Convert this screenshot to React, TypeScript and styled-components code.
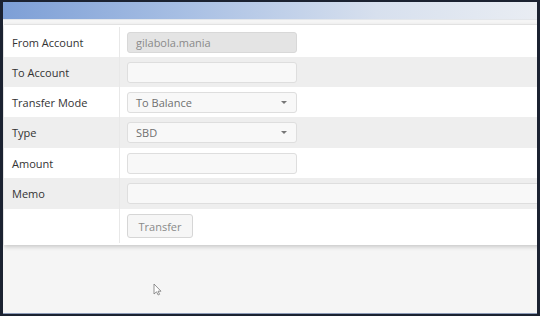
import React from "react";
import styled, { createGlobalStyle } from "styled-components";

const GlobalStyle = createGlobalStyle`
  html, body {
    margin: 0;
    padding: 0;
    background: #1b2231;
  }
  body {
    font-family: "Open Sans", "Liberation Sans", sans-serif;
  }
`;

const Frame = styled.div`
  width: 540px;
  height: 316px;
  box-sizing: border-box;
  padding: 2px 3px 3px 3px;
  background: #1b2231;
`;

const Screen = styled.div`
  position: relative;
  height: 100%;
  background: #f5f5f5;
  overflow: hidden;
  display: flex;
  flex-direction: column;
  border-bottom: 1px solid #8c9bb8;
`;

const TopBar = styled.div`
  height: 17px;
  flex-shrink: 0;
  background: linear-gradient(90deg, #7d9fd6 0%, #a9c0e4 35%, #d7e0ee 70%, #e9edf3 100%);
  border-bottom: 1px solid #e3e6ea;
`;

const Card = styled.div`
  margin: 4px -6px 0 1px;
  padding: 2px 0 2px;
  background: #ffffff;
  border-top: 1px solid #e2e2e2;
  box-shadow: 0 2px 4px rgba(0, 0, 0, 0.18);
`;

const Row = styled.div<{ $shade?: boolean; $h: number }>`
  display: flex;
  align-items: center;
  height: ${(p) => p.$h}px;
  background: ${(p) => (p.$shade ? "#eeeeee" : "#ffffff")};
`;

const Label = styled.div`
  width: 107px;
  flex-shrink: 0;
  align-self: stretch;
  display: flex;
  align-items: center;
  padding-left: 8px;
  border-right: 1px solid #e8e8e8;
  font-size: 11px;
  color: #333333;
`;

const Field = styled.div`
  flex: 1;
  display: flex;
  align-items: center;
  padding-left: 7px;
`;

const Input = styled.div<{ $disabled?: boolean; $wide?: boolean }>`
  box-sizing: border-box;
  height: 21px;
  width: ${(p) => (p.$wide ? "100%" : "170px")};
  display: flex;
  align-items: center;
  justify-content: space-between;
  padding: 0 9px 0 8px;
  border: 1px solid ${(p) => (p.$disabled ? "#d8d8d8" : "#dedede")};
  border-radius: 3px;
  background: ${(p) => (p.$disabled ? "#e4e4e4" : "#f8f8f8")};
  font-size: 11px;
  color: ${(p) => (p.$disabled ? "#8a8a8a" : "#707070")};
`;

const Caret = styled.span`
  width: 0;
  height: 0;
  border-left: 3px solid transparent;
  border-right: 3px solid transparent;
  border-top: 3px solid #777777;
`;

const Button = styled.div`
  box-sizing: border-box;
  height: 24px;
  width: 66px;
  display: flex;
  align-items: center;
  justify-content: center;
  border: 1px solid #d6d6d6;
  border-radius: 3px;
  background: #f6f6f6;
  font-size: 11px;
  color: #8a8a8a;
`;

const Cursor = styled.svg`
  position: absolute;
  left: 150px;
  top: 281px;
`;

type FieldDef = {
  label: string;
  h: number;
  value?: string;
  select?: boolean;
  disabled?: boolean;
  wide?: boolean;
};

const fields: FieldDef[] = [
  { label: "From Account", h: 30, value: "gilabola.mania", disabled: true },
  { label: "To Account", h: 30 },
  { label: "Transfer Mode", h: 30, value: "To Balance", select: true },
  { label: "Type", h: 31, value: "SBD", select: true },
  { label: "Amount", h: 30 },
  { label: "Memo", h: 31, wide: true },
];

export default function App() {
  return (
    <Frame>
      <GlobalStyle />
      <Screen>
        <TopBar />
        <Card>
          {fields.map((f, i) => (
            <Row key={f.label} $h={f.h} $shade={i % 2 === 1}>
              <Label>{f.label}</Label>
              <Field>
                <Input $disabled={f.disabled} $wide={f.wide}>
                  <span>{f.value ?? ""}</span>
                  {f.select && <Caret />}
                </Input>
              </Field>
            </Row>
          ))}
          <Row $h={34}>
            <Label />
            <Field>
              <Button>Transfer</Button>
            </Field>
          </Row>
        </Card>
        <Cursor width="9" height="13" viewBox="0 0 9 13">
          <path d="M1 1 L1 11 L3.5 8.8 L5.2 12 L6.6 11.3 L5 8.2 L8 8.2 Z" fill="#ffffff" stroke="#777" strokeWidth="0.8" />
        </Cursor>
      </Screen>
    </Frame>
  );
}
